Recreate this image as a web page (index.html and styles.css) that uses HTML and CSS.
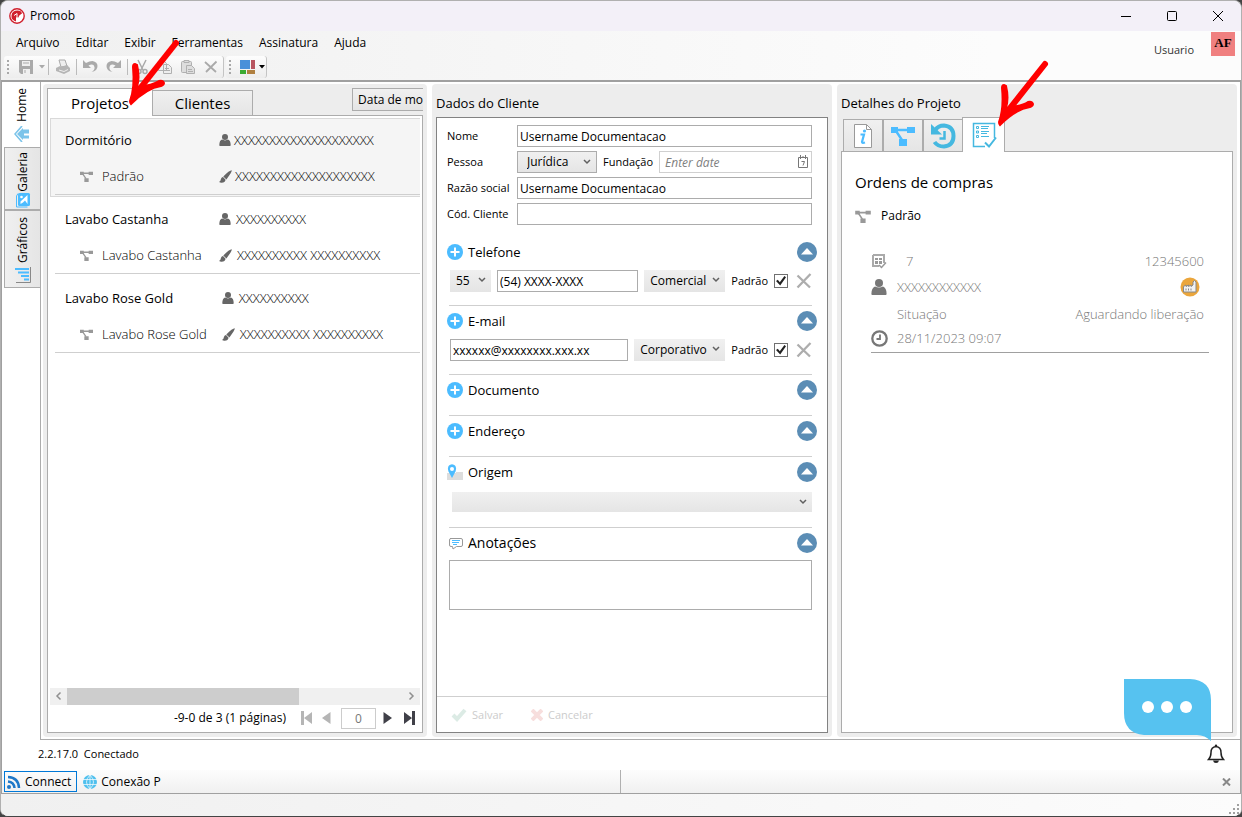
FILE: index.html
```html
<!DOCTYPE html>
<html lang="pt-BR">
<head>
    <meta charset="UTF-8">
    <meta name="viewport" content="width=device-width, initial-scale=1.0">
    <title>Promob</title>
    <link rel="stylesheet" href="styles.css">
</head>
<body>
    <!-- shared icons -->
    <svg class="sprite" width="0" height="0" aria-hidden="true">
        <symbol id="i-person" viewBox="0 0 12 12"><circle cx="6" cy="3" r="3"/><path d="M1 12q-.8 0-.7-1Q.4 6.500 3 5.600q3 1.600 6 0 2.600.9 2.700 5.400 0 1-.7 1z"/></symbol>
        <symbol id="i-brush" viewBox="0 0 13 13"><path d="M12.800.3Q13 2 7.400 9.400L4.300 6.500Q10.500.200 12.800.3zM4 7.100l2.600 2.600Q6 13 2 12.700L0 11.900Q1.800 11 2 8.800 2.600 7.200 4 7.100z"/></symbol>
        <symbol id="i-tree" viewBox="0 0 24 20"><path d="M0 1h7v6H0zM16 1h8v6h-8zM8 13h8v7H8z"/><path d="M6 4h11M5 5l6 9" fill="none" stroke="currentColor" stroke-width="2.400"/></symbol>
        <symbol id="i-plus" viewBox="0 0 16 16"><circle cx="8" cy="8" r="8"/><path d="M8 3.500v9M3.500 8h9" stroke="#fff" stroke-width="2"/></symbol>
        <symbol id="i-up" viewBox="0 0 20 20"><circle cx="10" cy="10" r="10"/><path d="M4 12.500 10 6l6 6.500z" fill="#fff"/></symbol>
        <symbol id="i-chev" viewBox="0 0 8 6"><path d="m1 1 3 3 3-3" fill="none" stroke="#606060" stroke-width="1.500"/></symbol>
        <symbol id="i-del" viewBox="0 0 16 16"><path d="M1.500 2.500 14 14.500M14.500 1 1.500 14.500" fill="none" stroke="#adadad" stroke-width="2.300"/></symbol>
        <symbol id="i-arrow" viewBox="0 0 54 68"><path d="M48 5 6 58" stroke="#f00" stroke-width="6" stroke-linecap="round"/><path d="M9 27q3 12 0 22 16-2 22-6 4-1 5 2 0 2-3 3Q19 50 3 66q-1-1-1-3Q7 50 5 29q0-3 2-3z" fill="#f00" stroke="#f00" stroke-width="2"/></symbol>
    </svg>

    <div class="window">
        <header class="titlebar">
            <svg class="logo" width="16" height="16" viewBox="0 0 16 16"><circle cx="8" cy="8" r="7.200" fill="#fff" stroke="#d0202e" stroke-width="1.400"/><path d="M7 13.500Q2 12 2.500 7.500 3 2.500 8.500 2.500q4 0 4.500 3l-2.500 1.800L9 10l-1-2-1 2z" fill="#d0202e"/><path d="M5 7.500 8 5.500v3" fill="none" stroke="#fff"/></svg>
            <span class="app-name">Promob</span>
            <button class="win-btn" aria-label="Minimizar"><svg width="12" height="12" viewBox="0 0 12 12"><path d="M1 6.500h10"/></svg></button>
            <button class="win-btn" aria-label="Maximizar"><svg width="12" height="12" viewBox="0 0 12 12"><rect x="1.500" y="1.500" width="9" height="9" rx="1"/></svg></button>
            <button class="win-btn" aria-label="Fechar"><svg width="12" height="12" viewBox="0 0 12 12"><path d="m1 1 10 10M11 1 1 11"/></svg></button>
        </header>

        <div class="topbar">
            <div class="topbar-left">
                <nav class="menu">
                    <a href="#">Arquivo</a>
                    <a href="#">Editar</a>
                    <a href="#">Exibir</a>
                    <a href="#">Ferramentas</a>
                    <a href="#">Assinatura</a>
                    <a href="#">Ajuda</a>
                </nav>
                <div class="toolbars">
                    <div class="toolbar">
                        <i class="grip"></i>
                        <button class="tool" aria-label="Salvar"><svg width="16" height="16" viewBox="0 0 16 16"><path d="M1 1h14v14H3l-2-2z" fill="#aaa"/><path d="M4 2h8v5H4zM5 10h7v5H5z" fill="#f0f0f0"/><path d="M5 4h6M7 11v3" stroke="#aaa"/></svg></button>
                        <button class="tool caret" aria-label="Mais"><svg width="6" height="4" viewBox="0 0 6 4"><path d="M0 0h6L3 3.500z" fill="#aaa"/></svg></button>
                        <i class="sep"></i>
                        <button class="tool" aria-label="Imprimir"><svg width="16" height="16" viewBox="0 0 16 16"><path d="M4 1h6l2 6-6 1z" fill="#eee" stroke="#aaa"/><path d="M1 9l4-2 1 1 6-2 3 3v3l-6 3-8-3z" fill="#b5b5b5"/><path d="m4 11 5 1.500 4-2" stroke="#eee" fill="none"/></svg></button>
                        <i class="sep"></i>
                        <button class="tool" aria-label="Desfazer"><svg width="17" height="16" viewBox="0 0 17 16"><path d="M1 1v8h8L6.500 6.500q5-2.500 6 1.500.5 3-3 5 6-1 6-6 0-4-5-5-3 0-6.500 2z" fill="#aaa"/></svg></button>
                        <button class="tool" aria-label="Refazer"><svg width="17" height="16" viewBox="0 0 17 16"><path d="M16 1v8H8l2.500-2.500q-5-2.500-6 1.500-.5 3 3 5-6-1-6-6 0-4 5-5 3 0 6.500 2z" fill="#aaa"/></svg></button>
                        <i class="sep"></i>
                        <button class="tool" aria-label="Recortar"><svg width="16" height="16" viewBox="0 0 16 16" fill="none" stroke="#aaa" stroke-width="1.500"><path d="m4 1 5 10M12 1 7 11"/><circle cx="5" cy="12.500" r="2"/><circle cx="11" cy="12.500" r="2"/></svg></button>
                        <button class="tool" aria-label="Copiar"><svg width="16" height="16" viewBox="0 0 16 16" fill="#eee" stroke="#b0b0b0"><path d="M1.500 2.500h6l2 2v7h-8zM6.500 5.500h5l3 3v6h-8z"/><path d="M8 9.500h4M8 11.500h5"/></svg></button>
                        <button class="tool" aria-label="Colar"><svg width="16" height="16" viewBox="0 0 16 16" fill="#ddd" stroke="#b0b0b0"><rect x="1.500" y="2.500" width="10" height="11" rx="1"/><path d="M4 1.500h5v2H4zM6.500 6.500h5l3 3v5h-8z"/><path d="M8 10.500h4M8 12.500h5"/></svg></button>
                        <button class="tool" aria-label="Excluir"><svg width="14" height="14" viewBox="0 0 14 14"><path d="m1 2 11 10M12.500 1.500 2 12" stroke="#aaa" stroke-width="1.800"/></svg></button>
                    </div>
                    <div class="toolbar">
                        <i class="grip"></i>
                        <button class="tool" aria-label="Aparência"><svg width="16" height="16" viewBox="0 0 16 16"><path d="M0 1h10v9H0z" fill="#4a90d9"/><path d="M11 1h4v9h-4z" fill="#b85560"/><path d="M0 11h6v4H0z" fill="#3cab32"/><path d="M7 11h8v4H7z" fill="#b08040"/></svg></button>
                        <button class="tool caret tight" aria-label="Opções de aparência"><svg width="6" height="4" viewBox="0 0 6 4"><path d="M0 0h6L3 3.500z"/></svg></button>
                    </div>
                </div>
            </div>
            <div class="user">
                <span>Usuario</span>
                <span class="avatar">AF</span>
            </div>
        </div>

        <div class="workspace">
            <nav class="side-tabs">
                <button class="side-tab active"><span>Home</span>
                    <svg width="16" height="16" viewBox="0 0 16 16"><path d="M8 0 1 8l7 8" fill="none" stroke="#7cc4ea" stroke-width="1.600"/><path d="M9 2v12L3 8z" fill="#7cc4ea"/><path d="M8 3.500h7v4h-5v2h5v3H8z" fill="#7cc4ea"/></svg>
                </button>
                <button class="side-tab"><span>Galeria</span>
                    <svg width="16" height="16" viewBox="0 0 16 16"><path d="M3 1.500 1.500 4v11h11" fill="none" stroke="#4cbcff"/><rect x="3" y="1" width="12" height="13" rx="1.500" fill="#4cbcff"/><path d="M12.500 3v9L10 8.500 8 10.500 5.500 12V9.500z" fill="#fff"/><circle cx="6.500" cy="5" r="1.300" fill="#fff"/></svg>
                </button>
                <button class="side-tab"><span>Gráficos</span>
                    <svg width="16" height="16" viewBox="0 0 16 16"><path d="M1 15.500h14.500V0" fill="none" stroke="#888"/><path d="M0 1h14v2H0zM3 4.500h11v2H3zM6 8h8v2H6zM9 11.500h5v2H9z" fill="#4cbcff"/></svg>
                </button>
            </nav>

            <main class="panels">
                <section class="panel">
                    <div class="tabs">
                        <button class="tab active">Projetos<svg class="pointer" width="54" height="68"><use href="#i-arrow"/></svg></button>
                        <button class="tab">Clientes</button>
                        <button class="sort">Data de mod</button>
                    </div>
                    <div class="box list-box">
                        <ul class="projects">
                            <li class="project selected">
                                <div class="project-grid">
                                    <span class="name">Dormitório</span>
                                    <span class="who"><svg width="12" height="12"><use href="#i-person"/></svg>XXXXXXXXXXXXXXXXXXXX</span>
                                    <span class="env"><svg width="13" height="11"><use href="#i-tree"/></svg>Padrão</span>
                                    <span class="who"><svg width="13" height="13"><use href="#i-brush"/></svg>XXXXXXXXXXXXXXXXXXXX</span>
                                </div>
                            </li>
                            <li class="project">
                                <div class="project-grid">
                                    <span class="name">Lavabo Castanha</span>
                                    <span class="who"><svg width="12" height="12"><use href="#i-person"/></svg>XXXXXXXXXX</span>
                                    <span class="env"><svg width="13" height="11"><use href="#i-tree"/></svg>Lavabo Castanha</span>
                                    <span class="who"><svg width="13" height="13"><use href="#i-brush"/></svg>XXXXXXXXXX XXXXXXXXXX</span>
                                </div>
                            </li>
                            <li class="project">
                                <div class="project-grid">
                                    <span class="name">Lavabo Rose Gold</span>
                                    <span class="who"><svg width="12" height="12"><use href="#i-person"/></svg>XXXXXXXXXX</span>
                                    <span class="env"><svg width="13" height="11"><use href="#i-tree"/></svg>Lavabo Rose Gold</span>
                                    <span class="who"><svg width="13" height="13"><use href="#i-brush"/></svg>XXXXXXXXXX XXXXXXXXXX</span>
                                </div>
                            </li>
                        </ul>
                        <div class="scrollbar">
                            <svg width="17" height="16" viewBox="0 0 17 16"><path d="M10.500 4.500 7 8l3.500 3.500"/></svg>
                            <div class="track"><div class="thumb"></div></div>
                            <svg width="17" height="16" viewBox="0 0 17 16"><path d="M6.500 4.500 10 8l-3.500 3.500"/></svg>
                        </div>
                        <div class="pager">
                            <label for="page">-9-0 de 3 (1 páginas)</label>
                            <button class="off" aria-label="Primeira"><svg width="11" height="14" viewBox="0 0 11 14"><path d="M0 0h3v14H0zM11 1v12L3 7z"/></svg></button>
                            <button class="off" aria-label="Anterior"><svg width="9" height="14" viewBox="0 0 9 14"><path d="M8.500 1v12L0 7z"/></svg></button>
                            <input id="page" type="text" value="0">
                            <button aria-label="Próxima"><svg width="9" height="14" viewBox="0 0 9 14"><path d="M.5 1v12L9 7z"/></svg></button>
                            <button aria-label="Última"><svg width="11" height="14" viewBox="0 0 11 14"><path d="M8 0h3v14H8zM0 1v12l8-6z"/></svg></button>
                        </div>
                    </div>
                </section>

                <section class="panel">
                    <h2>Dados do Cliente</h2>
                    <div class="box client-box">
                        <form class="client">
                            <div class="fields">
                                <label for="nome">Nome</label>
                                <input id="nome" type="text" value="Username Documentacao">
                                <label for="pessoa">Pessoa</label>
                                <div class="field-row">
                                    <span class="select framed"><select id="pessoa"><option>Jurídica</option><option>Física</option></select><svg width="8" height="6"><use href="#i-chev"/></svg></span>
                                    <label for="fundacao">Fundação</label>
                                    <span class="date">
                                        <input id="fundacao" type="text" placeholder="Enter date">
                                        <svg width="10" height="13" viewBox="0 0 10 13"><path d="M.5 2.500h9v10h-9zM2.500 0v4M7.500 0v4M5 1v2M3.500 6.500h3L5 10.500" fill="none" stroke="#777"/></svg>
                                    </span>
                                </div>
                                <label for="razao">Razão social</label>
                                <input id="razao" type="text" value="Username Documentacao">
                                <label for="codigo">Cód. Cliente</label>
                                <input id="codigo" type="text">
                            </div>

                            <div class="group">
                                <div class="group-head">
                                    <svg class="blue" width="16" height="16"><use href="#i-plus"/></svg>
                                    <h3>Telefone</h3>
                                    <button type="button" aria-label="Recolher"><svg width="20" height="20"><use href="#i-up"/></svg></button>
                                </div>
                                <div class="group-row">
                                    <span class="select ddi"><select aria-label="DDI"><option>55</option></select><svg width="8" height="6"><use href="#i-chev"/></svg></span>
                                    <input class="phone" type="text" value="(54) XXXX-XXXX" aria-label="Telefone">
                                    <span class="select kind"><select aria-label="Tipo"><option>Comercial</option></select><svg width="8" height="6"><use href="#i-chev"/></svg></span>
                                    <label class="check">Padrão <input type="checkbox" checked></label>
                                    <button type="button" aria-label="Remover"><svg width="16" height="16"><use href="#i-del"/></svg></button>
                                </div>
                            </div>

                            <div class="group">
                                <div class="group-head">
                                    <svg class="blue" width="16" height="16"><use href="#i-plus"/></svg>
                                    <h3>E-mail</h3>
                                    <button type="button" aria-label="Recolher"><svg width="20" height="20"><use href="#i-up"/></svg></button>
                                </div>
                                <div class="group-row">
                                    <input class="email" type="text" value="xxxxxx@xxxxxxxx.xxx.xx" aria-label="E-mail">
                                    <span class="select kind wide"><select aria-label="Tipo"><option>Corporativo</option></select><svg width="8" height="6"><use href="#i-chev"/></svg></span>
                                    <label class="check">Padrão <input type="checkbox" checked></label>
                                    <button type="button" aria-label="Remover"><svg width="16" height="16"><use href="#i-del"/></svg></button>
                                </div>
                            </div>

                            <div class="group short">
                                <div class="group-head">
                                    <svg class="blue" width="16" height="16"><use href="#i-plus"/></svg>
                                    <h3>Documento</h3>
                                    <button type="button" aria-label="Recolher"><svg width="20" height="20"><use href="#i-up"/></svg></button>
                                </div>
                            </div>

                            <div class="group short">
                                <div class="group-head">
                                    <svg class="blue" width="16" height="16"><use href="#i-plus"/></svg>
                                    <h3>Endereço</h3>
                                    <button type="button" aria-label="Recolher"><svg width="20" height="20"><use href="#i-up"/></svg></button>
                                </div>
                            </div>

                            <div class="group">
                                <div class="group-head">
                                    <svg width="16" height="16" viewBox="0 0 16 16"><path d="M0 9h9V8h7v8H0z" fill="#ddd"/><path d="M5 14 1.500 7.500Q-.5 1 5 .3q5.500.7 3.500 7.200z" fill="#4cbcff"/><circle cx="5" cy="5" r="2" fill="#fff"/></svg>
                                    <h3>Origem</h3>
                                    <button type="button" aria-label="Recolher"><svg width="20" height="20"><use href="#i-up"/></svg></button>
                                </div>
                                <span class="select origin"><select aria-label="Origem"><option></option></select><svg width="8" height="6"><use href="#i-chev"/></svg></span>
                            </div>

                            <div class="group last">
                                <div class="group-head">
                                    <svg width="16" height="16" viewBox="0 0 16 16"><path d="M3 3.500h11q1.500 0 1.500 1.500v5q0 1.500-1.500 1.500H9.500L6 14l-.5-2.500H4q-1.500 0-1.500-1.500V5q0-1.500 1.500-1.500z" fill="#fff" stroke="#999"/><path d="M5 5.500h8M5 7.500h7M6 9.500h4" stroke="#4cbcff"/></svg>
                                    <h3 class="notes-title">Anotações</h3>
                                    <button type="button" aria-label="Recolher"><svg width="20" height="20"><use href="#i-up"/></svg></button>
                                </div>
                                <textarea aria-label="Anotações"></textarea>
                            </div>
                        </form>
                        <div class="actions">
                            <button disabled><svg width="16" height="14" viewBox="0 0 16 14"><path d="m2 7 4 4 8-9" fill="none" stroke="#dcebe5" stroke-width="4"/></svg>Salvar</button>
                            <button disabled><svg width="12" height="12" viewBox="0 0 12 12"><path d="m1 1 10 10M11 1 1 11" stroke="#f7dedd" stroke-width="4"/></svg>Cancelar</button>
                        </div>
                    </div>
                </section>

                <section class="panel">
                    <h2>Detalhes do Projeto</h2>
                    <div class="icon-tabs">
                        <button class="icon-tab" aria-label="Informações"><svg width="24" height="26" viewBox="0 0 24 26"><path d="M3.500 1.500h12l5 5v18h-17z" fill="#fff" stroke="#999"/><path d="M15.500 1.500v5h5" fill="none" stroke="#999"/><path d="M9.500 11.500h3.500l-2 7.500q0 1.500 3 .5" fill="none" stroke="#4cbcff" stroke-width="2.200"/><circle cx="13.500" cy="8" r="1.600" fill="#4cbcff"/></svg></button>
                        <button class="icon-tab" aria-label="Ambientes"><svg class="blue" width="24" height="20"><use href="#i-tree"/></svg></button>
                        <button class="icon-tab" aria-label="Histórico"><svg width="26" height="26" viewBox="0 0 26 26"><path d="M5 7.500Q8 2.500 14 2.500q9.500 1 9.500 10.500t-9.500 10.500q-6.500 0-9.500-4.500" fill="none" stroke="#45b8e0" stroke-width="4"/><path d="M1 1v10.500h11z" fill="#45b8e0"/><path d="M14.500 8v7.500H9.500" fill="none" stroke="#45b8e0" stroke-width="2.500"/></svg></button>
                        <button class="icon-tab active" aria-label="Ordens de compras">
                            <svg width="26" height="26" viewBox="0 0 26 26" fill="none" stroke="#45b8e0"><path d="M23.500 16V1.500h-21v23H14" stroke-width="1.500"/><path d="M5.500 4.500h2v2h-2zM5.500 9h2v2h-2zM5.500 13.500h2v2h-2z"/><path d="M10 4.500h8M10 6.500h7M10 9.500h8M10 11.500h6M10 14.500h8"/><path d="m14 20.500 4 4 7-9" stroke-width="2"/></svg>
                            <svg class="pointer" width="54" height="68"><use href="#i-arrow"/></svg>
                        </button>
                    </div>
                    <div class="box orders">
                        <h1>Ordens de compras</h1>
                        <div class="order-env"><svg width="16" height="13"><use href="#i-tree"/></svg>Padrão</div>
                        <div class="order">
                            <svg width="16" height="16" viewBox="0 0 16 16"><path d="M2 2h11v8M2 2v11h6" fill="none" stroke="#aaa" stroke-width="2"/><path d="M4 5h3v2H4zM8 5h3v2H8zM4 8h3v3H4zM8 8h3v3H8z" fill="#999"/><path d="m8 12 2.500 2.500L15 9.500" fill="none" stroke="#999" stroke-width="1.500"/></svg>
                            <span class="number">7</span>
                            <span class="right">12345600</span>
                            <svg width="16" height="16"><use href="#i-person"/></svg>
                            <span>XXXXXXXXXXXX</span>
                            <span class="right"><svg class="factory" width="20" height="20" viewBox="0 0 20 20"><circle cx="10" cy="10" r="9.500" fill="#eba63c"/><path d="M3.500 15V9.500L6 8v1.500L8.500 8v1.500L11 8v1.500l2-1.500V5l1.500-1.500L16 5v10z" fill="#f2f2f2" stroke="#888"/><path d="M6 11.500v2M8.500 11.500v2M11 11.500v2" stroke="#888"/></svg></span>
                            <span></span>
                            <span>Situação</span>
                            <span class="right">Aguardando liberação</span>
                            <svg width="17" height="17" viewBox="0 0 17 17" fill="none" stroke="#777"><circle cx="8.500" cy="8.500" r="7.200" stroke-width="2.300"/><path d="M9 4.500V9H5.500" stroke-width="1.800"/></svg>
                            <span class="when">28/11/2023 09:07</span>
                        </div>
                    </div>
                    <button class="chat" aria-label="Chat"><svg width="88" height="62" viewBox="0 0 88 62"><path d="M0 0h66q21 1 21 21v41q-6-6-14-6H20Q0 54 0 34z" fill="#56c2f0"/><circle cx="24" cy="28" r="6" fill="#fff"/><circle cx="43" cy="28" r="6" fill="#fff"/><circle cx="62" cy="28" r="6" fill="#fff"/></svg></button>
                </section>
            </main>
        </div>

        <div class="version">
            <span>2.2.17.0&nbsp; Conectado</span>
            <button aria-label="Notificações"><svg width="18" height="20" viewBox="0 0 18 20"><path d="M1.500 15.500Q4 13 4 8.500 4 3 9 2.500q5 .5 5 6 0 4.500 2.500 7z" fill="none" stroke="#222" stroke-width="1.500"/><path d="M6 16.500h6q-.5 2.500-3 2.500t-3-2.500z" fill="#222"/><circle cx="9" cy="1.800" r="1.200" fill="#222"/></svg></button>
        </div>

        <div class="connections">
            <div class="conn-left">
                <button class="conn current"><svg width="14" height="14" viewBox="0 0 14 14" fill="none" stroke="#1f78c8" stroke-width="2.500"><circle cx="2" cy="12" r="1" stroke-width="2"/><path d="M1 6.500q6 .5 6.500 6.500M1 2q10.500.5 11 11"/></svg>Connect</button>
                <button class="conn"><svg width="14" height="14" viewBox="0 0 14 14"><circle cx="7" cy="7" r="7" fill="#4fc0ee"/><path d="M0 4.500h14M0 9.500h14M7 0v14M7 0Q0 7 7 14M7 0q7 7 0 14" fill="none" stroke="#fff" stroke-width=".7"/></svg>Conexão P</button>
            </div>
            <button class="conn-close" aria-label="Fechar painel"><svg width="9" height="8" viewBox="0 0 9 8"><path d="m1 .5 7 7M8 .5l-7 7" stroke="#888" stroke-width="2"/></svg></button>
        </div>

        <footer class="statusbar">
            <svg width="12" height="12" viewBox="0 0 12 12" fill="#a0a0a0"><path d="M8 0h2v2H8zM4 4h2v2H4zM8 4h2v2H8zM0 8h2v2H0zM4 8h2v2H4zM8 8h2v2H8z"/></svg>
        </footer>
    </div>
</body>
</html>
```

FILE: styles.css
```css
:root {
    --line: #a0a0a0;
    --soft-line: #acacac;
    --rule: #cfcfcf;
    --panel: #ededed;
    --blue: #4cbcff;
    --steel: #5b8db5;
}

* {
    box-sizing: border-box;
}

body {
    margin: 0;
    background: #444;
    color: #000;
    font-family: "Open Sans", "Noto Sans", sans-serif;
    font-size: 12px;
    line-height: 16px;
}

button,
input,
select,
textarea {
    font: inherit;
    color: inherit;
}

button {
    display: flex;
    align-items: center;
    justify-content: center;
    padding: 0;
    border: 0;
    background: none;
}

svg {
    display: block;
    flex: none;
}

svg:not([fill]) {
    fill: currentColor;
}

h1, h2, h3, ul {
    margin: 0;
    padding: 0;
    font-weight: 400;
}

.sprite {
    position: absolute;
}

.blue {
    color: var(--blue);
}

.window {
    display: flex;
    flex-direction: column;
    min-height: 100vh;
    border: 1px solid #b0b0b0;
    border-bottom-color: #444;
    border-radius: 8px;
    overflow: hidden;
    background: #fff;
}

/* title bar */
.titlebar {
    display: flex;
    align-items: center;
    height: 30px;
    padding-left: 8px;
    background: #f3f0f8;
}

.app-name {
    flex: 1;
    margin-left: 5px;
}

.win-btn {
    width: 46px;
    height: 30px;
}

.titlebar .win-btn svg {
    fill: none;
    stroke: #000;
}

/* menu and toolbars */
.topbar {
    display: flex;
    justify-content: space-between;
    height: 49px;
    background: linear-gradient(to right, #f0f0f0, #fcfcfc 80%);
}

.menu {
    display: flex;
    gap: 16px;
    padding: 4px 15px 5px;
}

.menu a {
    color: #000;
    text-decoration: none;
}

.toolbars {
    display: flex;
    gap: 2px;
    padding-left: 3px;
}

.toolbar {
    display: flex;
    align-items: center;
    height: 22px;
    padding-right: 1px;
    border-right: 1px solid #c4c4c4;
    border-radius: 3px;
    background: linear-gradient(#fdfdfd, #ededed);
}

.grip {
    width: 2px;
    height: 14px;
    margin: 0 5px 0 3px;
    background: repeating-linear-gradient(#a8a8a8 0 2px, transparent 2px 4px);
}

.tool {
    width: 23px;
    height: 22px;
}

.tool.caret {
    width: 9px;
}

.tool.tight {
    width: 6px;
}

.sep {
    width: 1px;
    height: 16px;
    margin: 0 2px;
    background: #bbb;
}

.user {
    display: flex;
    align-items: flex-start;
    gap: 17px;
    padding-right: 6px;
    font-size: 11px;
    color: #333;
}

.user > span:first-child {
    padding-top: 11px;
}

.avatar {
    width: 24px;
    height: 24px;
    margin-top: 1px;
    background: #f08080;
    color: #000;
    font: bold 13px/22px "Liberation Serif", serif;
    text-align: center;
}

/* workspace */
.workspace {
    flex: 1;
    display: flex;
    border: 1px solid var(--line);
    border-top-width: 2px;
    border-bottom: 0;
}

.side-tabs {
    display: flex;
    flex-direction: column;
    width: 38px;
    padding-left: 2px;
}

.side-tab {
    flex-direction: column;
    justify-content: space-between;
    height: 63px;
    padding: 4px 0 1px;
    border: 1px solid var(--soft-line);
    border-right: 0;
    background: linear-gradient(to right, #f0f0f0, #e5e5e5);
}

.side-tab + .side-tab + .side-tab {
    height: 78px;
    padding: 6px 0 4px;
}

.side-tab.active {
    height: 65px;
    padding: 6px 0 5px;
    border: 0;
    background: #fff;
}

.side-tab span {
    writing-mode: vertical-rl;
    transform: rotate(180deg);
}

.panels {
    flex: 1;
    display: grid;
    grid-template-columns: 384fr 400fr 400fr;
    gap: 5px;
    min-width: 0;
    padding: 2px 3px 2px 2px;
    border: 1px solid var(--soft-line);
    border-top: 0;
    border-right: 0;
}

.panel {
    position: relative;
    display: flex;
    flex-direction: column;
    min-width: 0;
    padding: 4px;
    border-radius: 4px;
    background: var(--panel);
}

.panel h2 {
    height: 29px;
    font-size: 13px;
    line-height: 30px;
}

.box {
    flex: 1;
    display: flex;
    flex-direction: column;
    border: 1px solid var(--soft-line);
    background: #fff;
}

/* project list */
.tabs {
    display: flex;
    align-items: flex-end;
    height: 27px;
}

.tab {
    position: relative;
    width: 101px;
    height: 25px;
    border: 1px solid var(--soft-line);
    border-bottom: 0;
    background: linear-gradient(#f0f0f0, #e5e5e5);
    font-size: 15px;
}

.tab.active {
    z-index: 1;
    width: 105px;
    height: 28px;
    margin-bottom: -1px;
    border-right: 0;
    background: #fff;
}

.pointer {
    position: absolute;
    z-index: 3;
    left: 80px;
    top: -51px;
}

.sort {
    justify-content: flex-start;
    width: 71px;
    height: 23px;
    margin: 0 0 4px auto;
    padding-left: 5px;
    border: 1px solid var(--soft-line);
    border-right: 0;
    background: linear-gradient(#f0f0f0, #e5e5e5);
    white-space: nowrap;
    overflow: hidden;
}

.list-box {
    padding: 2px 2px 1px;
}

.projects {
    flex: 1;
    list-style: none;
}

.project {
    height: 79px;
    padding: 4px 0 2px 5px;
    border: 0 solid #d9d9d9;
}

.project.selected {
    padding: 3px 0 1px 4px;
    border-width: 1px 0 1px 1px;
    background: #f5f5f5;
}

.project-grid {
    display: grid;
    grid-template-columns: minmax(154px, auto) 1fr;
    grid-template-rows: 36px 36px;
    align-items: center;
    height: 73px;
    padding-left: 10px;
    border-bottom: 1px solid var(--rule);
    font-size: 13px;
}

.project-grid span {
    display: flex;
    align-items: center;
    white-space: nowrap;
}

.env {
    gap: 9px;
    padding: 0 15px;
    font-weight: 300;
}

.env svg {
    color: #999;
}

.who {
    gap: 5px;
    color: #000;
    font-weight: 300;
}

.selected .who {
    gap: 3px;
}

.who svg {
    color: #666;
}

.scrollbar {
    display: flex;
    height: 17px;
    background: #f0f0f0;
}

.list-box .scrollbar svg {
    fill: none;
    stroke: #909090;
    stroke-width: 1.5;
}

.track {
    flex: 1;
}

.thumb {
    width: 69%;
    height: 100%;
    background: #cdcdcd;
}

.pager {
    display: flex;
    align-items: center;
    justify-content: flex-end;
    gap: 10px;
    height: 26px;
    padding-right: 5px;
    color: #404048;
}

.pager label {
    margin-right: 5px;
    color: #000;
}

.pager .off {
    color: #b5b5b5;
}

.pager button:last-child {
    margin-left: 2px;
}

.pager input {
    width: 35px;
    height: 21px;
    margin-right: -3px;
    border: 1px solid #ccc;
    color: #777;
    text-align: center;
}

/* client form */
.client-box {
    border-color: #828282;
}

.client {
    flex: 1;
    padding: 7px 15px 0 12px;
}

.fields {
    display: grid;
    grid-template-columns: 70px 1fr;
    grid-auto-rows: 22px;
    gap: 4px 0;
    align-items: center;
    margin: 0 0 12px -2px;
}

.fields label {
    font-size: 11px;
    white-space: nowrap;
}

.client input[type="text"] {
    width: 100%;
    min-width: 0;
    height: 22px;
    padding: 0 2px;
    border: 1px solid var(--soft-line);
    background: #fff;
}

.field-row {
    display: flex;
    align-items: center;
    gap: 6px;
}

.select {
    position: relative;
    display: block;
    flex: none;
    height: 22px;
    background: linear-gradient(#f0f0f0, #e5e5e5);
}

.select select {
    display: block;
    width: 100%;
    height: 100%;
    padding: 0 14px 0 6px;
    border: 0;
    background: none;
    appearance: none;
}

.select svg {
    position: absolute;
    right: 5px;
    top: 7px;
    pointer-events: none;
}

.framed {
    width: 80px;
    border: 1px solid var(--soft-line);
}

.framed select {
    padding-left: 9px;
}

.date {
    position: relative;
    flex: 1;
}

.client .date input {
    display: block;
    padding-left: 5px;
    border-color: #d0d0d0;
}

.date input::placeholder {
    color: #808080;
    font-style: italic;
}

.date svg {
    position: absolute;
    right: 4px;
    top: 4px;
}

.group {
    padding-bottom: 13px;
    border-bottom: 1px solid var(--rule);
}

.group.short {
    padding-bottom: 10px;
}

.group.last {
    border: 0;
}

.group-head {
    display: flex;
    align-items: center;
    gap: 5px;
    height: 30px;
    margin: 0 -5px 0 -2px;
}

.group-head h3 {
    flex: 1;
    font-size: 13px;
    line-height: 18px;
}

.group-head .notes-title {
    font-size: 14px;
}

.group-head button {
    color: var(--steel);
}

.group-row {
    display: flex;
    align-items: center;
    gap: 6px;
    margin: 3px 0 0 1px;
}

.ddi {
    width: 41px;
}

.kind {
    width: 81px;
}

.kind.wide {
    width: 91px;
}

.client .phone,
.client .email {
    flex: 1;
}

.check {
    display: flex;
    align-items: center;
    gap: 6px;
    font-size: 11px;
}

.check input {
    display: grid;
    place-items: center;
    width: 14px;
    height: 14px;
    margin: 0 2px 0 0;
    border: 1px solid #707070;
    background: #fff;
    appearance: none;
}

.check input:checked::after {
    content: "";
    width: 10px;
    height: 10px;
    background: #222;
    clip-path: polygon(0 50%, 18% 38%, 38% 62%, 84% 0, 100% 12%, 42% 96%);
}

.origin {
    height: 20px;
    margin: 5px 0 15px 3px;
}

.group:has(.origin) {
    padding-bottom: 0;
}

.client textarea {
    display: block;
    width: 100%;
    height: 50px;
    margin-top: 2px;
    border: 1px solid var(--soft-line);
    resize: none;
}

.actions {
    display: flex;
    gap: 28px;
    height: 36px;
    padding-left: 14px;
    border-top: 1px solid var(--rule);
    color: #ccc;
    font-size: 11px;
}

.actions button {
    gap: 5px;
}

/* project details */
.icon-tabs {
    display: flex;
    align-items: flex-end;
    height: 34px;
    padding-left: 2px;
}

.icon-tab {
    position: relative;
    width: 40px;
    height: 32px;
    border: 1px solid var(--soft-line);
    border-bottom: 0;
    background: linear-gradient(#f0f0f0, #e5e5e5);
}

.icon-tab.active {
    z-index: 1;
    width: 43px;
    height: 35px;
    margin: 0 0 -1px -1px;
    background: #fff;
}

.icon-tab .pointer {
    left: 34px;
    top: -59px;
}

.orders {
    padding: 21px 23px 0 13px;
}

.orders h1 {
    font-size: 15px;
    line-height: 18px;
}

.order-env {
    display: flex;
    align-items: center;
    gap: 10px;
    margin-top: 17px;
}

.order-env svg {
    color: #999;
}

.order {
    display: grid;
    grid-template-columns: 26px auto 1fr;
    grid-template-rows: 26px 26px 28px 20px;
    align-items: center;
    margin: 24px 0 0 16px;
    padding-bottom: 4px;
    border-bottom: 1px solid var(--line);
    color: #777;
    font-size: 13px;
    font-weight: 300;
    white-space: nowrap;
}

.order .number {
    padding-left: 9px;
}

.order .right {
    justify-self: end;
    padding-right: 5px;
}

.order .when {
    grid-column: 2 / 4;
}

.factory {
    margin-right: 4px;
}

.chat {
    position: absolute;
    right: 25px;
    bottom: -4px;
}

/* bottom bars */
.version {
    display: flex;
    align-items: center;
    justify-content: space-between;
    height: 30px;
    padding: 0 15px 2px 36px;
    border: solid var(--line);
    border-width: 0 1px;
    font-size: 11px;
}

.connections {
    display: flex;
    align-items: center;
    justify-content: space-between;
    height: 24px;
    border: 1px solid var(--line);
    border-top: 0;
    background: linear-gradient(#fdfdfd, #f0f0f0);
}

.conn-left {
    display: flex;
    align-items: center;
    gap: 5px;
    width: 50%;
    height: 100%;
    padding-left: 2px;
    border-right: 1px solid #b0b0b0;
}

.conn {
    gap: 4px;
    height: 21px;
    border: 1px solid transparent;
}

.conn.current {
    padding: 0 5px 0 2px;
    border-color: #0078d7;
}

.conn-close {
    margin-right: 9px;
}

.statusbar {
    display: flex;
    align-items: flex-end;
    justify-content: flex-end;
    height: 22px;
    background: linear-gradient(to right, #f0f0f0, #fcfcfc);
}
```
